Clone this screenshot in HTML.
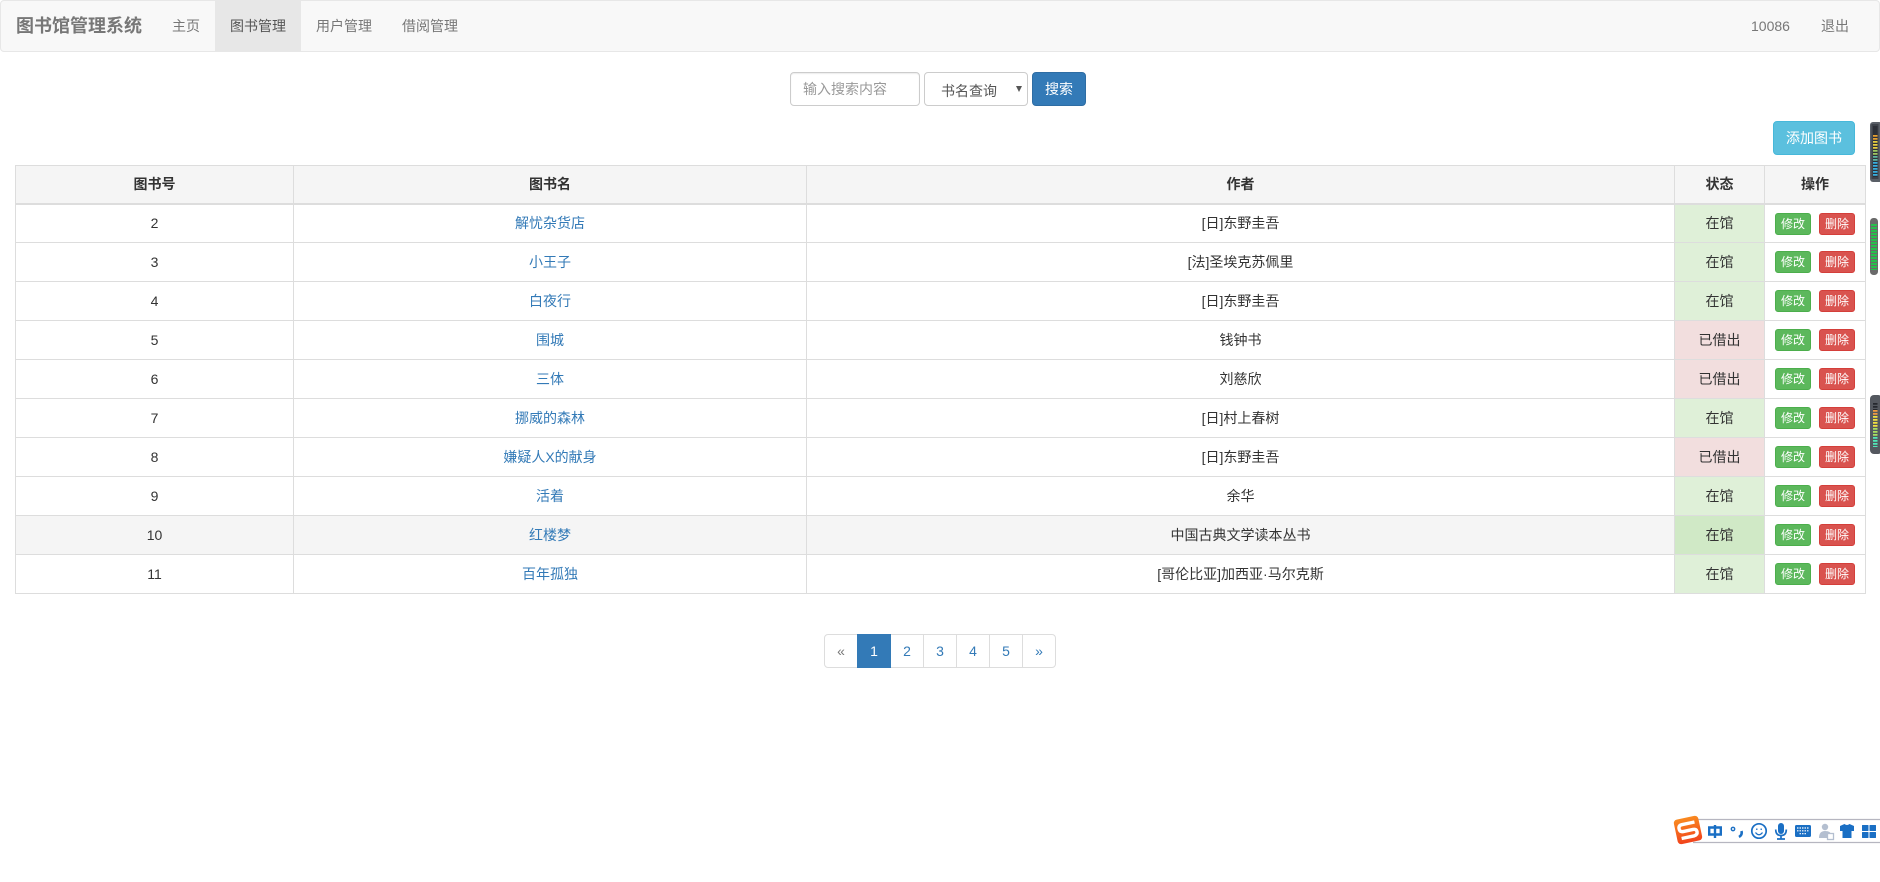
<!DOCTYPE html>
<html lang="zh"><head><meta charset="utf-8"><title>图书馆管理系统</title>
<style>
*{box-sizing:border-box}
html,body{margin:0;padding:0;width:1880px;height:882px;overflow:hidden;background:#fff}
body{font:14px/20px "Liberation Sans","Noto Sans CJK SC",sans-serif;color:#333;position:relative}
a{text-decoration:none;color:#337ab7}
.abs{position:absolute}
.nav{left:0;top:0;width:1880px;height:52px;background:#f8f8f8;border:1px solid #e7e7e7;border-radius:4px}
.nv{position:absolute;top:16px;color:#777;white-space:nowrap}
.brand{left:16px;top:16px;font-size:18px;font-weight:bold;color:#777;line-height:20px;position:absolute;white-space:nowrap}
.act{position:absolute;left:215px;top:1px;width:86px;height:50px;background:#e7e7e7}
.input{left:790px;top:72px;width:130px;height:34px;border:1px solid #ccc;border-radius:4px;background:#fff;color:#999;padding:6px 12px;line-height:20px;box-shadow:inset 0 1px 1px rgba(0,0,0,.075)}
.select{left:924px;top:72px;width:104px;height:34px;border:1px solid #ccc;border-radius:4px;background:#fff;color:#555;padding:8px 16px;line-height:20px}
.select i{position:absolute;left:91px;top:13px;width:0;height:0;border:3.5px solid transparent;border-top:6px solid #555;border-bottom:0}
.btn{border-radius:4px;color:#fff;text-align:center;border:1px solid}
.search{left:1032px;top:72px;width:54px;height:34px;background:#337ab7;border-color:#2e6da4;line-height:32px}
.add{left:1773px;top:121px;width:82px;height:34px;background:#5bc0de;border-color:#46b8da;line-height:32px}
table{position:absolute;left:15px;top:165px;width:1850px;border-collapse:collapse;table-layout:fixed;text-align:center}
th,td{border:1px solid #ddd;padding:0;vertical-align:middle}
th{background:#f5f5f5;height:38px;border-bottom:2px solid #ddd;font-weight:bold}
td{height:39px}
.s{background:#dff0d8}.d{background:#f2dede}
.h td{background:#f5f5f5}.h td.s{background:#d0e9c6}.h td.o{background:#fff}
.o{position:relative}
.o b{position:absolute;top:8px;width:36px;height:22px;font:12px/20px "Liberation Sans","Noto Sans CJK SC",sans-serif;border-radius:3px;color:#fff;border:1px solid}
.o b.e{left:10px;background:#5cb85c;border-color:#4cae4c}
.o b.x{left:54px;background:#d9534f;border-color:#d43f3a}
.pg{left:824px;top:634px;width:232px;height:34px;border:1px solid #ddd;border-radius:4px;display:flex}
.pg span{display:block;height:32px;line-height:32px;text-align:center;color:#337ab7;border-left:1px solid #ddd;width:33px}
.pg span:first-child{border-left:0;color:#777;width:32px}
.pg .on{background:#337ab7;color:#fff;border-left:0;width:34px;height:34px;margin-top:-1px;line-height:34px}
.pg .n{border-left:0}
</style></head><body>
<div class="abs nav"></div>
<div class="act"></div>
<div class="brand">图书馆管理系统</div>
<div class="nv" style="left:172px">主页</div>
<div class="nv" style="left:230px;color:#555">图书管理</div>
<div class="nv" style="left:316px">用户管理</div>
<div class="nv" style="left:402px">借阅管理</div>
<div class="nv" style="left:1751px">10086</div>
<div class="nv" style="left:1821px">退出</div>

<div class="abs input">输入搜索内容</div>
<div class="abs select">书名查询<i></i></div>
<div class="abs btn search">搜索</div>
<div class="abs btn add">添加图书</div>

<table>
<colgroup><col style="width:278px"><col style="width:513px"><col style="width:868px"><col style="width:90px"><col style="width:101px"></colgroup>
<tr><th>图书号</th><th>图书名</th><th>作者</th><th>状态</th><th>操作</th></tr>
<tr><td>2</td><td><a>解忧杂货店</a></td><td>[日]东野圭吾</td><td class="s">在馆</td><td class="o"><b class="e">修改</b><b class="x">删除</b></td></tr>
<tr><td>3</td><td><a>小王子</a></td><td>[法]圣埃克苏佩里</td><td class="s">在馆</td><td class="o"><b class="e">修改</b><b class="x">删除</b></td></tr>
<tr><td>4</td><td><a>白夜行</a></td><td>[日]东野圭吾</td><td class="s">在馆</td><td class="o"><b class="e">修改</b><b class="x">删除</b></td></tr>
<tr><td>5</td><td><a>围城</a></td><td>钱钟书</td><td class="d">已借出</td><td class="o"><b class="e">修改</b><b class="x">删除</b></td></tr>
<tr><td>6</td><td><a>三体</a></td><td>刘慈欣</td><td class="d">已借出</td><td class="o"><b class="e">修改</b><b class="x">删除</b></td></tr>
<tr><td>7</td><td><a>挪威的森林</a></td><td>[日]村上春树</td><td class="s">在馆</td><td class="o"><b class="e">修改</b><b class="x">删除</b></td></tr>
<tr><td>8</td><td><a>嫌疑人X的献身</a></td><td>[日]东野圭吾</td><td class="d">已借出</td><td class="o"><b class="e">修改</b><b class="x">删除</b></td></tr>
<tr><td>9</td><td><a>活着</a></td><td>余华</td><td class="s">在馆</td><td class="o"><b class="e">修改</b><b class="x">删除</b></td></tr>
<tr class="h"><td>10</td><td><a>红楼梦</a></td><td>中国古典文学读本丛书</td><td class="s">在馆</td><td class="o"><b class="e">修改</b><b class="x">删除</b></td></tr>
<tr><td>11</td><td><a>百年孤独</a></td><td>[哥伦比亚]加西亚·马尔克斯</td><td class="s">在馆</td><td class="o"><b class="e">修改</b><b class="x">删除</b></td></tr>
</table>

<div class="abs pg"><span>«</span><span class="on">1</span><span class="n" style="width:32px">2</span><span>3</span><span>4</span><span>5</span><span>»</span></div>

<svg class="abs" style="left:1868px;top:118px" width="12" height="340" viewBox="0 0 12 340">
<rect x="2" y="4" width="12" height="60" rx="3" fill="#5a5f67"/>
<rect x="3.500" y="6" width="7" height="55" fill="#3e424a"/>
<rect x="5" y="8" width="4.500" height="51" fill="#2c2f37"/>
<g fill="none" stroke-width="4.500" stroke-dasharray="1.800 1.200">
<path d="M7.250 17V23" stroke="#e8a030"/><path d="M7.250 23V32" stroke="#e8d040"/><path d="M7.250 32V38" stroke="#a0c860"/><path d="M7.250 38V44" stroke="#60b8a0"/><path d="M7.250 44V59" stroke="#38b0e0"/></g>
<rect x="2" y="100" width="8" height="57" rx="3.500" fill="#6a6a6a"/>
<path d="M6 106V152" stroke="#26c04c" stroke-width="6" stroke-dasharray="2 1"/>
<rect x="2" y="277" width="12" height="59" rx="4" fill="#54585f"/>
<g fill="none" stroke-width="4.500" stroke-dasharray="1.800 1.200">
<path d="M7.250 285V292" stroke="#25282e"/><path d="M7.250 292V298" stroke="#f09a40"/><path d="M7.250 298V310" stroke="#f0e040"/><path d="M7.250 310V319" stroke="#a8e060"/><path d="M7.250 319V329" stroke="#50e8b8"/></g>
</svg>

<svg class="abs" style="left:1670px;top:812px" width="210" height="36" viewBox="0 0 210 36">
<defs><linearGradient id="g" x1="0" y1="0" x2="0" y2="1"><stop offset="0" stop-color="#f98a20"/><stop offset="1" stop-color="#f1431c"/></linearGradient></defs>
<path d="M23 7.500H210M23 30.500H210" stroke="#b6b6c0" stroke-width="1.200"/>
<g transform="rotate(-12 18 18)"><rect x="5.500" y="5.500" width="25" height="25" rx="3.500" fill="url(#g)"/>
<path d="M26 11.500H13Q9.500 11.500 9.500 15T13 18.500H23Q26.500 18.500 26.500 21.500T23 25H10" fill="none" stroke="#fff" stroke-width="3.400"/></g>
<g fill="none" stroke="#1a6fc4">
<path d="M39.200 15.500H50.800V22.500H39.200ZM45 13V26" stroke-width="2.400"/>
<circle cx="63" cy="17" r="1.700" stroke-width="1.400"/>
<path d="M71.500 19Q72.500 23 69 25" stroke-width="2.600"/>
<circle cx="89" cy="19" r="7.200" stroke-width="1.700"/>
<path d="M85.500 20.500Q89 25 92.500 20.500M86.800 16.500V18M91.200 16.500V18" stroke-width="1.300"/>
<rect x="108" y="11" width="6" height="11" rx="3" fill="#1a6fc4" stroke="none"/>
<path d="M105.700 17.500Q105.700 23.500 111 23.500T116.300 17.500M111 23.500V27M107 27H115" stroke-width="1.700"/>
<rect x="125" y="13" width="16" height="12" rx="1.500" fill="#1a6fc4" stroke="none"/>
<path d="M127 16H139M127 18.800H139M129.500 21.700H136.500" stroke="#fff" stroke-width="1.200" stroke-dasharray="1.500 1"/>
</g>
<circle cx="155" cy="15" r="3.200" fill="#b4bfd0"/>
<path d="M149 26Q149 19 155 19T161 23V26Z" fill="#b4bfd0"/>
<rect x="157.500" y="21.500" width="6" height="6" fill="#fff" stroke="#b4bfd0" stroke-width="1.300"/>
<path d="M170 14L174.500 12Q177 14 179.500 12L184 14L184 19L181.500 19V26H172.500V19L170 19Z" fill="#1a6fc4"/>
<rect x="192" y="13" width="6.500" height="6" rx=".5" fill="#1a6fc4"/><rect x="199.500" y="13" width="6.500" height="6" rx=".5" fill="#1a6fc4"/><rect x="192" y="20" width="6.500" height="6" rx=".5" fill="#1a6fc4"/><rect x="199.500" y="20" width="6.500" height="6" rx=".5" fill="#1a6fc4"/>
</svg>
</body></html>
